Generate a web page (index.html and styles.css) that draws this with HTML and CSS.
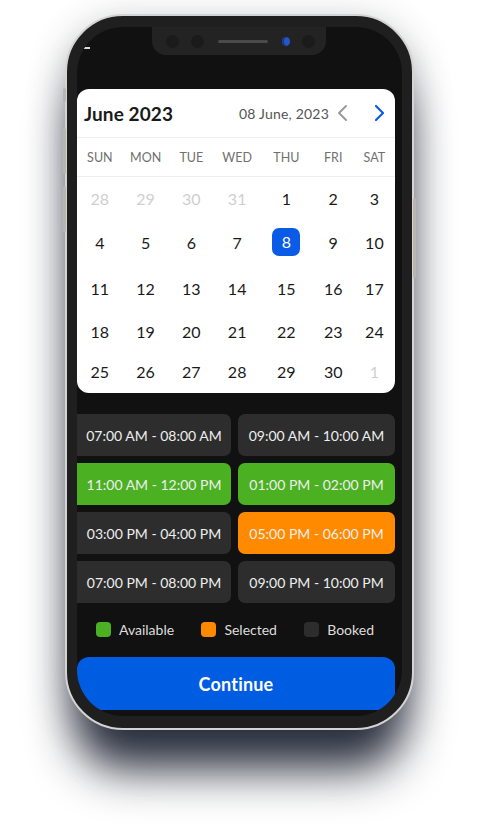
FILE: index.html
```
<!DOCTYPE html>
<html>
<head>
 <title>Book a slot</title>
 <link rel="stylesheet" href="styles.css">
</head>
<body>
  <div class="phone">
	<span class="side-btn side-a"></span>
	<span class="side-btn side-b"></span>
	<span class="side-btn side-c"></span>
	<span class="side-btn side-r"></span>
	<div class="screen">
	  <div class="notch">
		<span class="lens"></span>
		<span class="lens"></span>
		<span class="speaker"></span>
		<span class="cam"></span>
		<span class="lens"></span>
	  </div>
	  <div class="status"><span class="back"></span></div>

	  <div class="calendar">
		<div class="cal-head">
		  <h2 class="cal-title">June 2023</h2>
		  <div class="cal-nav">
			<span class="cal-date">08 June, 2023</span>
			<svg class="chev" width="14" height="18" viewBox="0 0 14 18"><polyline points="10,2 3,9 10,16" fill="none" stroke="#9a9a9a" stroke-width="2" stroke-linecap="round" stroke-linejoin="round"/></svg>
			<svg class="chev" width="14" height="18" viewBox="0 0 14 18"><polyline points="4,2 11,9 4,16" fill="none" stroke="#0a5ce6" stroke-width="2.2" stroke-linecap="round" stroke-linejoin="round"/></svg>
		  </div>
		</div>
		<div class="weekdays cal-grid">
		  <span>SUN</span><span>MON</span><span>TUE</span><span>WED</span><span>THU</span><span>FRI</span><span>SAT</span>
		</div>
		<div class="days cal-grid">
		  <span class="muted">28</span><span class="muted">29</span><span class="muted">30</span><span class="muted">31</span><span>1</span><span>2</span><span>3</span>
		  <span>4</span><span>5</span><span>6</span><span>7</span><span class="picked">8</span><span>9</span><span>10</span>
		  <span>11</span><span>12</span><span>13</span><span>14</span><span>15</span><span>16</span><span>17</span>
		  <span>18</span><span>19</span><span>20</span><span>21</span><span>22</span><span>23</span><span>24</span>
		  <span>25</span><span>26</span><span>27</span><span>28</span><span>29</span><span>30</span><span class="muted">1</span>
		</div>
	  </div>

	  <div class="slots">
		<div class="slot booked">07:00 AM - 08:00 AM</div>
		<div class="slot booked">09:00 AM - 10:00 AM</div>
		<div class="slot free">11:00 AM - 12:00 PM</div>
		<div class="slot free">01:00 PM - 02:00 PM</div>
		<div class="slot booked">03:00 PM - 04:00 PM</div>
		<div class="slot chosen">05:00 PM - 06:00 PM</div>
		<div class="slot booked">07:00 PM - 08:00 PM</div>
		<div class="slot booked">09:00 PM - 10:00 PM</div>
	  </div>

	  <div class="legend">
		<span class="key"><i class="dot free"></i>Available</span>
		<span class="key"><i class="dot chosen"></i>Selected</span>
		<span class="key"><i class="dot booked"></i>Booked</span>
	  </div>

	  <button class="continue">Continue</button>
	</div>
  </div>
</body>
</html>
```
FILE: styles.css
```
  html,body{min-height:839px;}
  body{margin:0;background:#fff;font-family:"Lato","Inter",sans-serif;}

  .phone{position:relative;box-sizing:border-box;width:349px;height:716px;margin:14px 0 0 65px;
	padding:11px 10px 12px 10px;background:#1f1f1f;border:2px solid #d4d4d4;border-radius:58px;
	box-shadow:0 50px 46px -10px rgba(18,24,40,.88),0 8px 36px rgba(40,46,60,.3);}
  .side-btn{position:absolute;width:3px;background:#b9b6b2;border-radius:2px;}
  .side-a{left:-4px;top:72px;height:14px;}
  .side-b{left:-4px;top:112px;height:46px;}
  .side-c{left:-4px;top:170px;height:46px;}
  .side-r{right:-4px;top:182px;height:80px;}

  .screen{position:relative;height:100%;background:#111;border-radius:46px;overflow:hidden;
	padding:62px 7px 0 0;box-sizing:border-box;}

  .notch{position:absolute;top:0;left:75px;width:174px;height:28px;background:#232323;
	border-radius:0 0 14px 14px;display:flex;align-items:center;gap:12px;padding-left:14px;box-sizing:border-box;}
  .lens{width:13px;height:13px;border-radius:50%;background:#1b1b1b;}
  .speaker{width:50px;height:3px;border-radius:2px;background:#4a4a4a;margin:0 2px;}
  .cam{width:8px;height:9px;border-radius:50%;background:#2a55c8;box-shadow:inset 2px 0 0 #153a90;}
  .status{position:absolute;top:20px;left:7px;}
  .back{display:block;width:6px;height:2px;background:#ddd;}

  .calendar{background:#fff;border-radius:12px;height:304px;color:#1a1a1a;}
  .cal-head{display:flex;align-items:center;justify-content:space-between;height:48px;
	padding:0 9px 0 7px;border-bottom:1px solid #efefef;}
  .cal-title{margin:0;font-size:19px;font-weight:700;letter-spacing:.1px;}
  .cal-nav{display:flex;align-items:center;}
  .cal-date{font-size:14px;color:#555;letter-spacing:.2px;margin-right:7px;}
  .chev{display:block;}
  .chev + .chev{margin-left:22px;}

  .cal-grid{display:grid;grid-template-columns:1fr 1fr 1fr 1fr 1.15fr .9fr .9fr;justify-items:center;align-items:center;}
  .weekdays{height:38px;border-bottom:1px solid #efefef;font-size:12.5px;color:#707070;}
  .days{grid-template-rows:42px 46px 46px 40px 40px;padding-bottom:4px;font-size:16px;}
  .days .muted{color:#cfcfcf;}
  .days .picked{width:28px;height:28px;line-height:28px;text-align:center;border-radius:7px;background:#0a5ce6;color:#fff;}

  .slots{display:grid;grid-template-columns:154px 157px;gap:7px;margin-top:21px;}
  .slot{height:42px;border-radius:7px;display:flex;align-items:center;justify-content:center;
	font-size:14px;color:#eee;}
  .slots .slot:nth-child(odd){border-radius:0 7px 7px 0;}
  .booked{background:#2d2d2d;}
  .free{background:#4cb122;}
  .chosen{background:#ff8a00;}

  .legend{display:flex;justify-content:space-between;height:24px;align-items:center;margin:14px 0 0 19px;padding-right:21px;}
  .key{display:flex;align-items:center;font-size:14px;color:#ddd;}
  .dot{display:block;width:15px;height:15px;border-radius:4px;margin-right:8px;}

  .continue{display:block;width:100%;height:53px;margin-top:16px;border:0;border-radius:12px 12px 0 0;
	background:#005de1;color:#fff;font-family:"Lato","Inter",sans-serif;font-size:18px;font-weight:700;letter-spacing:.2px;}
```
